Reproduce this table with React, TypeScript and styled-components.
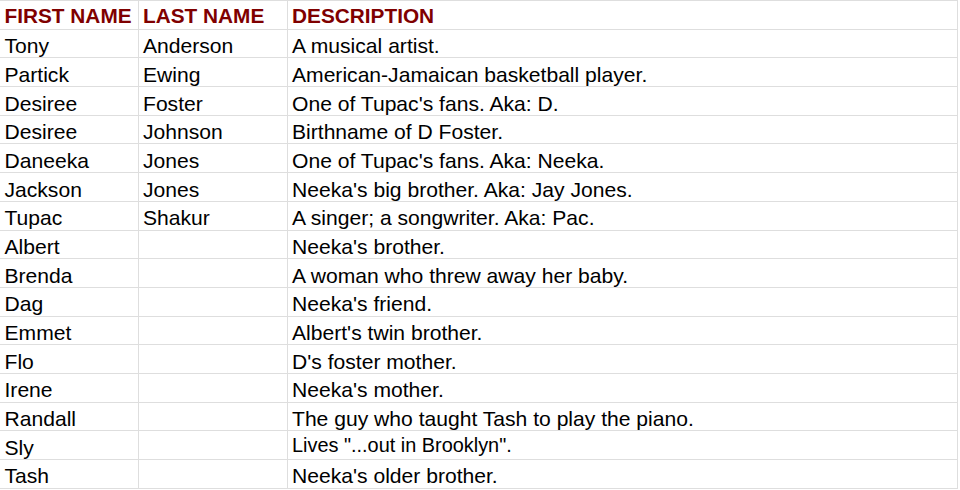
import React from "react";
import styled, { createGlobalStyle } from "styled-components";

const GlobalStyle = createGlobalStyle`
  html, body {
    margin: 0;
    padding: 0;
    background: #ffffff;
  }
  body {
    font-family: "Liberation Sans", Arial, Helvetica, sans-serif;
  }
`;

const Sheet = styled.div`
  display: grid;
  grid-template-columns: 139px 149px 670px;
  grid-auto-rows: 28.69px;
  width: 958px;
  border-top: 1px solid #dedede;
  box-sizing: border-box;
`;

const Cell = styled.div<{ $header?: boolean; $small?: boolean; $first?: boolean }>`
  display: flex;
  align-items: flex-end;
  box-sizing: border-box;
  border-right: 1px solid #dedede;
  border-bottom: 1px solid #dedede;
  padding-left: ${(p) => (p.$first ? "4.5px" : "4px")};
  padding-bottom: ${(p) => (p.$header ? "1px" : p.$small ? "2px" : "0px")};
  font-size: ${(p) => (p.$header ? "20.8px" : p.$small ? "19.9px" : "21.1px")};
  font-weight: ${(p) => (p.$header ? 700 : 400)};
  color: ${(p) => (p.$header ? "#7f0000" : "#000000")};
  line-height: 1.1;
  white-space: nowrap;
  overflow: hidden;
`;

type Row = { first: string; last: string; desc: string; small?: boolean };

const rows: Row[] = [
  { first: "Tony", last: "Anderson", desc: "A musical artist." },
  { first: "Partick", last: "Ewing", desc: "American-Jamaican basketball player." },
  { first: "Desiree", last: "Foster", desc: "One of Tupac's fans. Aka: D." },
  { first: "Desiree", last: "Johnson", desc: "Birthname of D Foster." },
  { first: "Daneeka", last: "Jones", desc: "One of Tupac's fans. Aka: Neeka." },
  { first: "Jackson", last: "Jones", desc: "Neeka's big brother. Aka: Jay Jones." },
  { first: "Tupac", last: "Shakur", desc: "A singer; a songwriter. Aka: Pac." },
  { first: "Albert", last: "", desc: "Neeka's brother." },
  { first: "Brenda", last: "", desc: "A woman who threw away her baby." },
  { first: "Dag", last: "", desc: "Neeka's friend." },
  { first: "Emmet", last: "", desc: "Albert's twin brother." },
  { first: "Flo", last: "", desc: "D's foster mother." },
  { first: "Irene", last: "", desc: "Neeka's mother." },
  { first: "Randall", last: "", desc: "The guy who taught Tash to play the piano." },
  { first: "Sly", last: "", desc: "Lives \"...out in Brooklyn\".", small: true },
  { first: "Tash", last: "", desc: "Neeka's older brother." },
];

export default function App() {
  return (
    <>
      <GlobalStyle />
      <Sheet>
        <Cell $header $first>FIRST NAME</Cell>
        <Cell $header>LAST NAME</Cell>
        <Cell $header>DESCRIPTION</Cell>
        {rows.map((r, i) => (
          <React.Fragment key={i}>
            <Cell $first>{r.first}</Cell>
            <Cell>{r.last}</Cell>
            <Cell $small={r.small}>{r.desc}</Cell>
          </React.Fragment>
        ))}
      </Sheet>
    </>
  );
}
